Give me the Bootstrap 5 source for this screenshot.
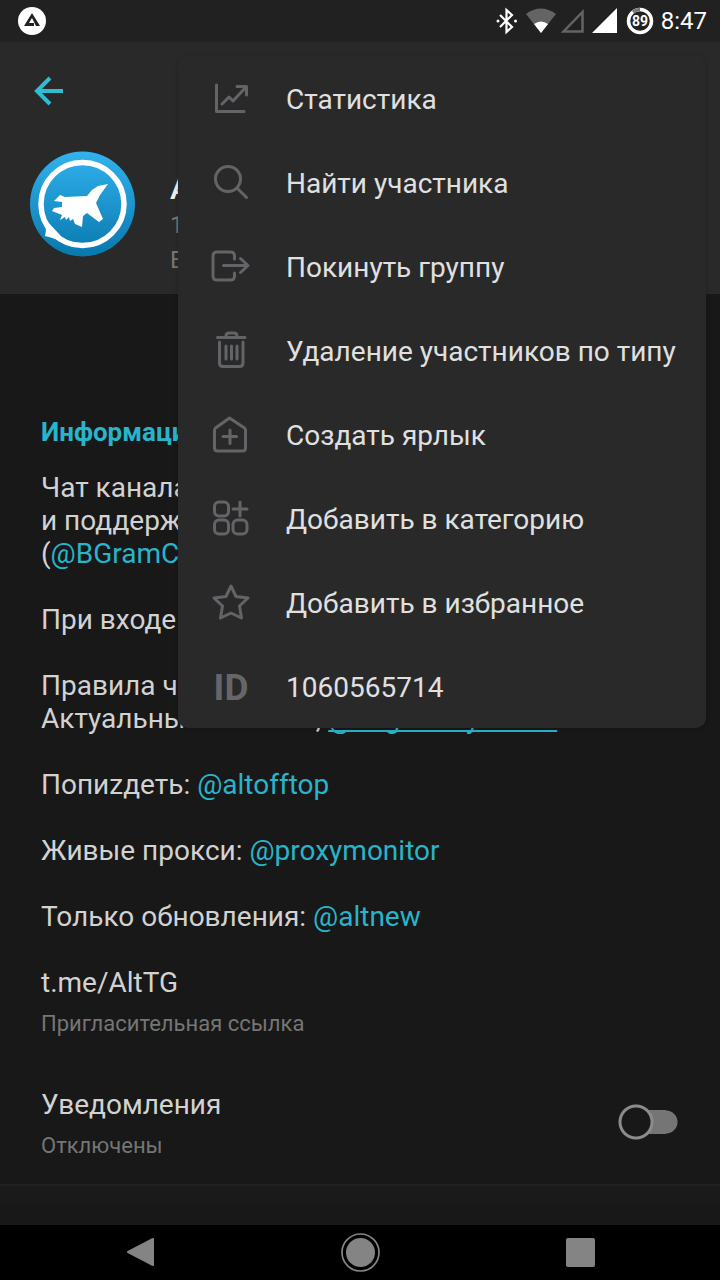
<!DOCTYPE html>
<html lang="ru" data-bs-theme="dark">
<head>
<meta charset="utf-8">
<meta name="viewport" content="width=device-width, initial-scale=1">
<title>AltTG</title>
<link href="https://cdn.jsdelivr.net/npm/bootstrap@5.3.0/dist/css/bootstrap.min.css" rel="stylesheet">
<style>
body{font-family:Roboto,"Noto Sans",sans-serif;font-size:28px;line-height:33px;background:#181818;color:#d2d2d2}
a{color:#28b4ca;text-decoration:none}
.status-bar{height:42px;background:#212121;color:#fff;font-size:24px;padding:0 13px 0 18px}
.status-icons{gap:6px}
.profile-head{height:252px;background:#292929;padding:32px 30px 0}
.back-btn{width:38px;height:34px;padding:0;line-height:0}
.avatar{width:106px;height:106px}
.profile-row{margin-top:43px;gap:34px}
.profile-name{font-size:32px;line-height:38px;font-weight:500;margin:18px 0 1px;color:#eee}
.sub-text{font-size:24px;line-height:35px;color:#757575}
.note{font-size:22px;line-height:28px;color:#757575}
.info{padding:0 41px}
.info h2{font-size:26px;line-height:33px;font-weight:700;color:#28b4ca;margin:122px 0 22px}
.info p{margin-bottom:33px}
.info .invite{margin-bottom:11px}
.long-link{text-decoration:underline;text-decoration-skip-ink:none;text-decoration-thickness:2px;text-underline-offset:2px}
.settings-row{padding:0 42px 0 41px;margin-top:50px;min-height:96px}
.settings-row .note{margin-top:11px}
.switch-input{appearance:none;width:60px;height:36px;margin:16px 0 0;background:radial-gradient(circle at 18px 18px,#181818 14px,#8b8b8b 15px,#8b8b8b 17px,transparent 18px),linear-gradient(#757575,#757575) 17px 6px/31px 24px no-repeat,radial-gradient(circle at 48px 18px,#757575 11px,transparent 12px)}
.rule{border-top:2px solid #222;background:#1a1a1a;min-height:20px}
.action-menu{position:absolute;top:55px;right:14px;width:528px;max-width:100%;padding:1px 0 0;background:#292929;border:0;border-radius:10px;box-shadow:0 1px 4px #0003;font-size:28px}
.action-menu .dropdown-item{height:84px;padding:2px 30px 0 31px;gap:33px;color:#e0e0e0}
.action-menu svg{width:44px;height:44px;flex-shrink:0;fill:none;stroke:#626467;stroke-width:3;stroke-linecap:round;stroke-linejoin:round}
.id-mark{width:44px;text-align:center;font-size:37px;font-weight:700;color:#646669}
.system-nav{height:55px;background:#000;padding:0 30px}
.system-nav button{width:60px;height:55px;padding:0;line-height:0}
</style>
</head>
<body>
<div class="position-relative min-vh-100 d-flex flex-column overflow-hidden">
<div class="status-bar d-flex justify-content-between align-items-center">
<svg width="28" height="28" viewBox="0 0 28 28"><circle cx="14" cy="14" r="14" fill="#fff"/><path d="M6 19 14 6l8 13h-4l-4-8-3 5h5v3z" fill="#212121"/></svg>
<div class="status-icons d-flex align-items-center">
<svg width="165" height="42" viewBox="490 0 165 42"><path d="m500 15 12 12-5.500 5V10l5.500 5-12 12" fill="none" stroke="#fff" stroke-width="2.200"/><circle cx="498" cy="21" r="1.500" fill="#fff"/><circle cx="515.500" cy="21" r="1.500" fill="#fff"/><path d="M526 14q15-11 30 0L541 33z" fill="#646464"/><path d="M534 24q7-5 14 0l-7 9z" fill="#fff"/><path d="M563.500 31.500 582.500 12v19.500z" fill="none" stroke="#646464" stroke-width="2.500"/><path d="M592 33 617 8v25z" fill="#fff"/><circle cx="640" cy="21" r="11.500" fill="none" stroke="#fff" stroke-width="3.500"/><path d="M633 12a11.500 11.500 0 0 1 7-2.500" fill="none" stroke="#777" stroke-width="3.500"/><text x="640" y="26" font-size="14" font-weight="700" text-anchor="middle" fill="#fff">89</text></svg>
<span>8:47</span>
</div>
</div>
<header class="profile-head">
<button class="btn back-btn d-block" aria-label="Назад"><svg width="38" height="34" viewBox="31 75 38 34"><path d="M63 91H37M50 78 37 91l13 13" fill="none" stroke="#2fbdd2" stroke-width="4"/></svg></button>
<div class="profile-row d-flex text-nowrap">
<svg class="avatar flex-shrink-0" viewBox="30 151 106 106"><defs><linearGradient id="sky" x2="0" y2="1"><stop stop-color="#32b2ee"/><stop offset="1" stop-color="#0878ad"/></linearGradient></defs><circle cx="82.500" cy="204" r="52.500" fill="url(#sky)"/><circle cx="82.500" cy="204" r="41.500" fill="none" stroke="#fff" stroke-width="5.500"/><path d="M39 210l7 17q0 6-1 9 10 2 20 8l-5-9-14-15z" fill="#fff"/><path d="M54 201 60 195 65 197 87 196 92 190 98 186 108 184 100 195 96 203 103 219 99 222 87 213 83 216 82 227 75 224 73 219 70 221 69 217 66 220 65 217 60 220 62 215 52 211 54 208 62 207 62 202z" fill="#fff"/></svg>
<div><h1 class="profile-name">AltTG</h1><div class="sub-text">1000</div><div class="sub-text">BGram</div></div>
</div>
</header>
<main class="flex-grow-1 d-flex flex-column text-nowrap">
<section class="info">
<h2>Информация</h2>
<p>Чат канала<br>и поддержки<br>(<a href="#">@BGramChat</a>)</p>
<p>При входе</p>
<p>Правила чата<br>Актуальные новости, <a href="#" class="long-link">@altgnewsydroids</a></p>
<p>Попиzдеть: <a href="#">@altofftop</a></p>
<p>Живые прокси: <a href="#">@proxymonitor</a></p>
<p>Только обновления: <a href="#">@altnew</a></p>
<p class="invite">t.me/AltTG</p>
<div class="note">Пригласительная ссылка</div>
</section>
<div class="settings-row d-flex justify-content-between">
<div><label for="notify" class="d-block">Уведомления</label><div class="note">Отключены</div></div>
<input class="switch-input flex-shrink-0" type="checkbox" role="switch" id="notify">
</div>
<div class="rule"></div>
</main>
<nav class="system-nav d-flex justify-content-around align-items-center">
<button class="btn" aria-label="Назад"><svg width="60" height="55" viewBox="111 1226 60 55"><path d="m128 1252 25-13v26z" fill="#848484" stroke="#848484" stroke-width="2" stroke-linejoin="round"/></svg></button>
<button class="btn" aria-label="Домой"><svg width="60" height="55" viewBox="331 1226 60 55"><circle cx="360.500" cy="1252.500" r="14.500" fill="#848484"/><circle cx="360.500" cy="1252.500" r="18.500" fill="none" stroke="#848484" stroke-width="1.700"/></svg></button>
<button class="btn" aria-label="Недавние"><svg width="60" height="55" viewBox="551 1226 60 55"><rect x="566" y="1238" width="29" height="29" rx="2" fill="#848484"/></svg></button>
</nav>
<div class="action-menu dropdown-menu show">
<button class="dropdown-item d-flex align-items-center"><svg viewBox="209 77 44 44"><path d="M216.500 85v26.500H244M222 104l7-7 4 4 13-14M237 86.500h9.500V95"/></svg>Статистика</button>
<button class="dropdown-item d-flex align-items-center"><svg viewBox="209 161 44 44"><circle cx="228" cy="179" r="12.500"/><path d="m237 188 9.500 9.500"/></svg>Найти участника</button>
<button class="dropdown-item d-flex align-items-center"><svg viewBox="209 245 44 44"><path d="M234.500 259v-3q0-4-4-4H217q-4 0-4 4v20q0 4 4 4h13.500q4 0 4-4v-3M223.500 265.500H248M240.500 258.500l7.500 7-7.500 7"/></svg>Покинуть группу</button>
<button class="dropdown-item d-flex align-items-center"><svg viewBox="209 329 44 44"><path d="M217.500 337.500h27.500M226 337v-1q0-3 3-3h5q3 0 3 3v1M219.500 342v21q0 3.500 3.500 3.500h16.500q3.500 0 3.500-3.500v-21M226 346v13M231.500 346v13M237 346v13"/></svg>Удаление участников по типу</button>
<button class="dropdown-item d-flex align-items-center"><svg viewBox="209 413 44 44"><path d="m229.500 418-14 10q-1 1-1 2v18q0 3 3 3h25q3 0 3-3v-18q0-1-1-2zM230 430v13.500M223 436.500h13.500"/></svg>Создать ярлык</button>
<button class="dropdown-item d-flex align-items-center"><svg viewBox="209 497 44 44"><rect x="214.500" y="502" width="14" height="14" rx="4.500"/><rect x="214.500" y="520" width="14" height="14" rx="4.500"/><rect x="233" y="520" width="14" height="14" rx="4.500"/><path d="M240 502v14M233 509h14"/></svg>Добавить в категорию</button>
<button class="dropdown-item d-flex align-items-center"><svg viewBox="209 581 44 44"><path d="m231 586 5 10.500 12 1.500-8.500 8 2 12-10.500-5-10.500 5 2-12-8.500-8 12-1.500z"/></svg>Добавить в избранное</button>
<button class="dropdown-item d-flex align-items-center"><span class="id-mark">ID</span>1060565714</button>
</div>
</div>
<script src="https://cdn.jsdelivr.net/npm/bootstrap@5.3.0/dist/js/bootstrap.bundle.min.js"></script>
</body>
</html>
